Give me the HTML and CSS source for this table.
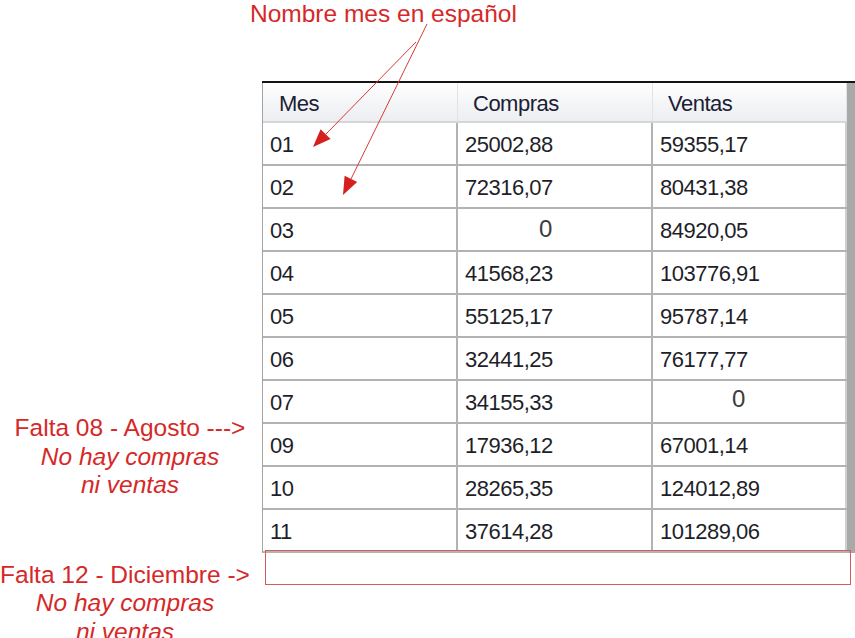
FILE: index.html
```html
<!DOCTYPE html>
<html lang="es">
<head>
<meta charset="utf-8">
<title>Compras y ventas por mes</title>
<link rel="stylesheet" href="styles.css">
</head>
<body>
<div class="page">
  <div class="title">Nombre mes en español</div>
  <div class="main">
    <div class="notes">
      <div class="note note-first">
        <div>Falta 08 - Agosto ---&gt;</div>
        <div class="em">No hay compras</div>
        <div class="em">ni ventas</div>
      </div>
      <div class="note note-second">
        <div>Falta 12 - Diciembre -&gt;</div>
        <div class="em">No hay compras</div>
        <div class="em">ni ventas</div>
      </div>
    </div>
    <div class="table-area">
      <div class="table-wrap">
        <div class="grid">
          <div class="row head">
            <div class="cell">Mes</div><div class="cell">Compras</div><div class="cell">Ventas</div>
          </div>
          <div class="row"><div class="cell">01</div><div class="cell">25002,88</div><div class="cell">59355,17</div></div>
          <div class="row"><div class="cell">02</div><div class="cell">72316,07</div><div class="cell">80431,38</div></div>
          <div class="row"><div class="cell">03</div><div class="cell zero z2">0</div><div class="cell">84920,05</div></div>
          <div class="row"><div class="cell">04</div><div class="cell">41568,23</div><div class="cell">103776,91</div></div>
          <div class="row"><div class="cell">05</div><div class="cell">55125,17</div><div class="cell">95787,14</div></div>
          <div class="row"><div class="cell">06</div><div class="cell">32441,25</div><div class="cell">76177,77</div></div>
          <div class="row"><div class="cell">07</div><div class="cell">34155,33</div><div class="cell zero z3">0</div></div>
          <div class="row"><div class="cell">09</div><div class="cell">17936,12</div><div class="cell">67001,14</div></div>
          <div class="row"><div class="cell">10</div><div class="cell">28265,35</div><div class="cell">124012,89</div></div>
          <div class="row"><div class="cell">11</div><div class="cell">37614,28</div><div class="cell">101289,06</div></div>
        </div>
        <div class="scrollbar"></div>
      </div>
      <div class="missing-box"></div>
    </div>
  </div>
  <svg class="arrows" width="855" height="638" viewBox="0 0 855 638">
    <line x1="427" y1="24" x2="351" y2="179" />
    <polygon points="343,195 357.2,181.9 344.6,175.7" />
    <line x1="416" y1="42" x2="326" y2="134" />
    <polygon points="313,147 330.6,139 320.6,129.3" />
  </svg>
</div>
</body>
</html>
```
FILE: styles.css
```css
html, body {
  margin: 0;
  padding: 0;
  background: #ffffff;
}

.page {
  position: relative;
  width: 855px;
  height: 638px;
  overflow: hidden;
  font-family: "Liberation Sans", Arial, sans-serif;
}

.title {
  height: 81px;
  padding-left: 250px;
  box-sizing: border-box;
  font-size: 24.5px;
  line-height: 27px;
  color: #d62828;
}

.main {
  display: flex;
  align-items: flex-start;
}

.notes {
  width: 262px;
  flex: none;
  color: #d62828;
  font-size: 24.5px;
  line-height: 28.5px;
}

.note {
  text-align: center;
}

.note-first {
  margin-top: 333px;
  padding-right: 2px;
}

.note-second {
  margin-top: 61px;
  padding-right: 12px;
}

.em {
  font-style: italic;
}

.table-area {
  width: 593px;
  flex: none;
}

.table-wrap {
  display: flex;
  border-top: 2px solid #141414;
}

.grid {
  border-left: 1px solid #a4a4a4;
}

.row {
  display: grid;
  grid-template-columns: 195px 195px 194px;
  height: 43px;
  box-sizing: border-box;
  border-bottom: 2px solid #b3b3b3;
}

.cell {
  box-sizing: border-box;
  display: flex;
  align-items: center;
  padding-left: 7px;
  padding-top: 3px;
  border-right: 2px solid #b3b3b3;
  font-size: 22px;
  letter-spacing: -0.5px;
  color: #1f1f2a;
  white-space: nowrap;
}

.cell:last-child {
  border-right: 2px solid #cfcfcf;
}

.row.head {
  height: 40px;
  background: linear-gradient(#ffffff, #f3f4f6 60%, #eceef1);
  border-bottom: 2px solid #d6d6d6;
}

.row.head .cell {
  padding-left: 15px;
  border-right: 1px solid #e3e3e3;
  color: #1b2033;
}

.row.head .cell:first-child {
  padding-left: 16px;
}

.cell.zero {
  font-size: 24px;
  letter-spacing: 0;
  color: #3c3c3c;
  padding-top: 0;
  padding-bottom: 2px;
}

.cell.z2 {
  padding-left: 81px;
}

.cell.z3 {
  padding-left: 79px;
  padding-bottom: 6px;
}

.scrollbar {
  width: 8px;
  background: #a9a9a9;
}

.missing-box {
  margin-top: -3px;
  margin-left: 3px;
  width: 586px;
  height: 35px;
  box-sizing: border-box;
  border: 1px solid #d65c5c;
  position: relative;
}

.arrows {
  position: absolute;
  left: 0;
  top: 0;
  pointer-events: none;
}

.arrows line {
  stroke: #d83a3a;
  stroke-width: 1;
}

.arrows polygon {
  fill: #d62020;
}
```
